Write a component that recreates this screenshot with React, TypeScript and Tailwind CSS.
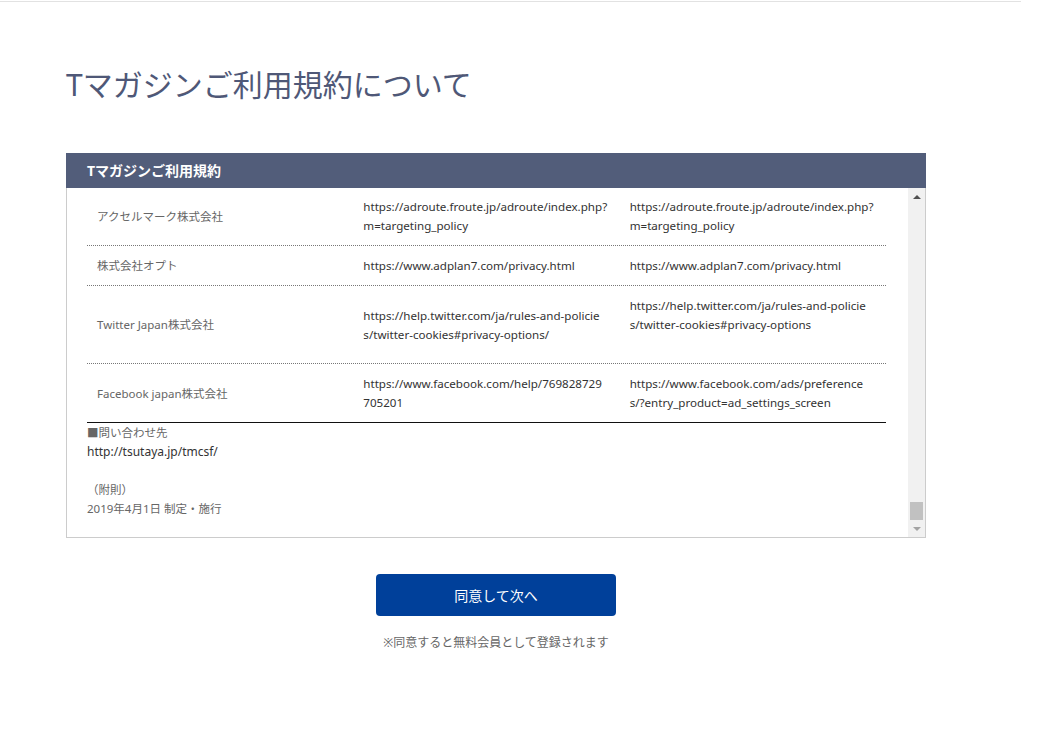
import React from "react";

const jp = { fontFamily: '"Noto Sans", "Noto Sans CJK JP", sans-serif' };

type Row = { name: string; a: string[]; b: string[] };

const rows: Row[] = [
    {
        name: "アクセルマーク株式会社",
        a: ["https://adroute.froute.jp/adroute/index.php?", "m=targeting_policy"],
        b: ["https://adroute.froute.jp/adroute/index.php?", "m=targeting_policy"],
    },
    {
        name: "株式会社オプト",
        a: ["https://www.adplan7.com/privacy.html"],
        b: ["https://www.adplan7.com/privacy.html"],
    },
    {
        name: "Twitter Japan株式会社",
        a: ["https://help.twitter.com/ja/rules-and-policie", "s/twitter-cookies#privacy-options/"],
        b: ["https://help.twitter.com/ja/rules-and-policie", "s/twitter-cookies#privacy-options", "\u00a0"],
    },
    {
        name: "Facebook japan株式会社",
        a: ["https://www.facebook.com/help/769828729", "705201"],
        b: ["https://www.facebook.com/ads/preference", "s/?entry_product=ad_settings_screen"],
    },
];

const Lines = ({ lines }: { lines: string[] }) => (
    <div className="px-[10px] py-[10px] text-[11.6px] leading-[19px] text-[#333] whitespace-nowrap">
        {lines.map((l, i) => (
            <div key={i}>{l}</div>
        ))}
    </div>
);

const Scrollbar = () => (
    <div className="w-[17px] shrink-0 bg-[#f1f1f1] flex flex-col">
        <div className="h-[17px] flex items-center justify-center">
            <div className="w-0 h-0 border-x-[4px] border-x-transparent border-b-[4px] border-b-[#505050]" />
        </div>
        <div className="flex-1" />
        <div className="h-[18px] mx-[2px] bg-[#c1c1c1]" />
        <div className="h-[17px] flex items-center justify-center">
            <div className="w-0 h-0 border-x-[4px] border-x-transparent border-t-[4px] border-t-[#a3a3a3]" />
        </div>
    </div>
);

export default function App() {
    return (
        <div className="min-h-[745px] bg-white" style={jp}>
            <div className="mt-px h-px w-[1021px] bg-[#e2e2e2]" />

            <div className="ml-[66px] w-[860px]">
                <h1 className="mt-[60px] text-[30px] leading-[45px] font-normal text-[#4f5877]">
                    Tマガジンご利用規約について
                </h1>

                <div className="mt-[46px]">
                    <div className="h-[35px] bg-[#525d7a] flex items-center pl-[21px]">
                        <span className="text-[14px] font-bold text-white">Tマガジンご利用規約</span>
                    </div>
                    <div className="h-[350px] border-x border-b border-[#cccccc] flex">
                        <div className="flex-1 overflow-hidden pl-[20px] pr-[22px]">
                            <div className="-mt-[1px]">
                                {rows.map((r, i) => (
                                    <div
                                        key={r.name}
                                        className={`grid grid-cols-3 items-center border-b ${
                                            i === rows.length - 1
                                                ? "border-solid border-[#111]"
                                                : "border-dotted border-[#777]"
                                        }`}
                                    >
                                        <div className="px-[10px] py-[10px] text-[11.5px] leading-[19px] text-[#666]">
                                            {r.name}
                                        </div>
                                        <Lines lines={r.a} />
                                        <Lines lines={r.b} />
                                    </div>
                                ))}
                                <div className="text-[11.5px] leading-[19px] text-[#666]">
                                    <p>■問い合わせ先</p>
                                    <p className="text-[12px] text-[#333]">http://tsutaya.jp/tmcsf/</p>
                                    <p>&nbsp;</p>
                                    <p>（附則）</p>
                                    <p>2019年4月1日 制定・施行</p>
                                </div>
                            </div>
                        </div>
                        <Scrollbar />
                    </div>
                </div>

                <div className="mt-[36px] flex flex-col items-center">
                    <button className="w-[240px] h-[42px] rounded-[4px] bg-[#00409a] text-white text-[14px]">
                        同意して次へ
                    </button>
                    <p className="mt-[18px] text-[12px] leading-[18px] text-[#666]">
                        ※同意すると無料会員として登録されます
                    </p>
                </div>
            </div>
        </div>
    );
}
